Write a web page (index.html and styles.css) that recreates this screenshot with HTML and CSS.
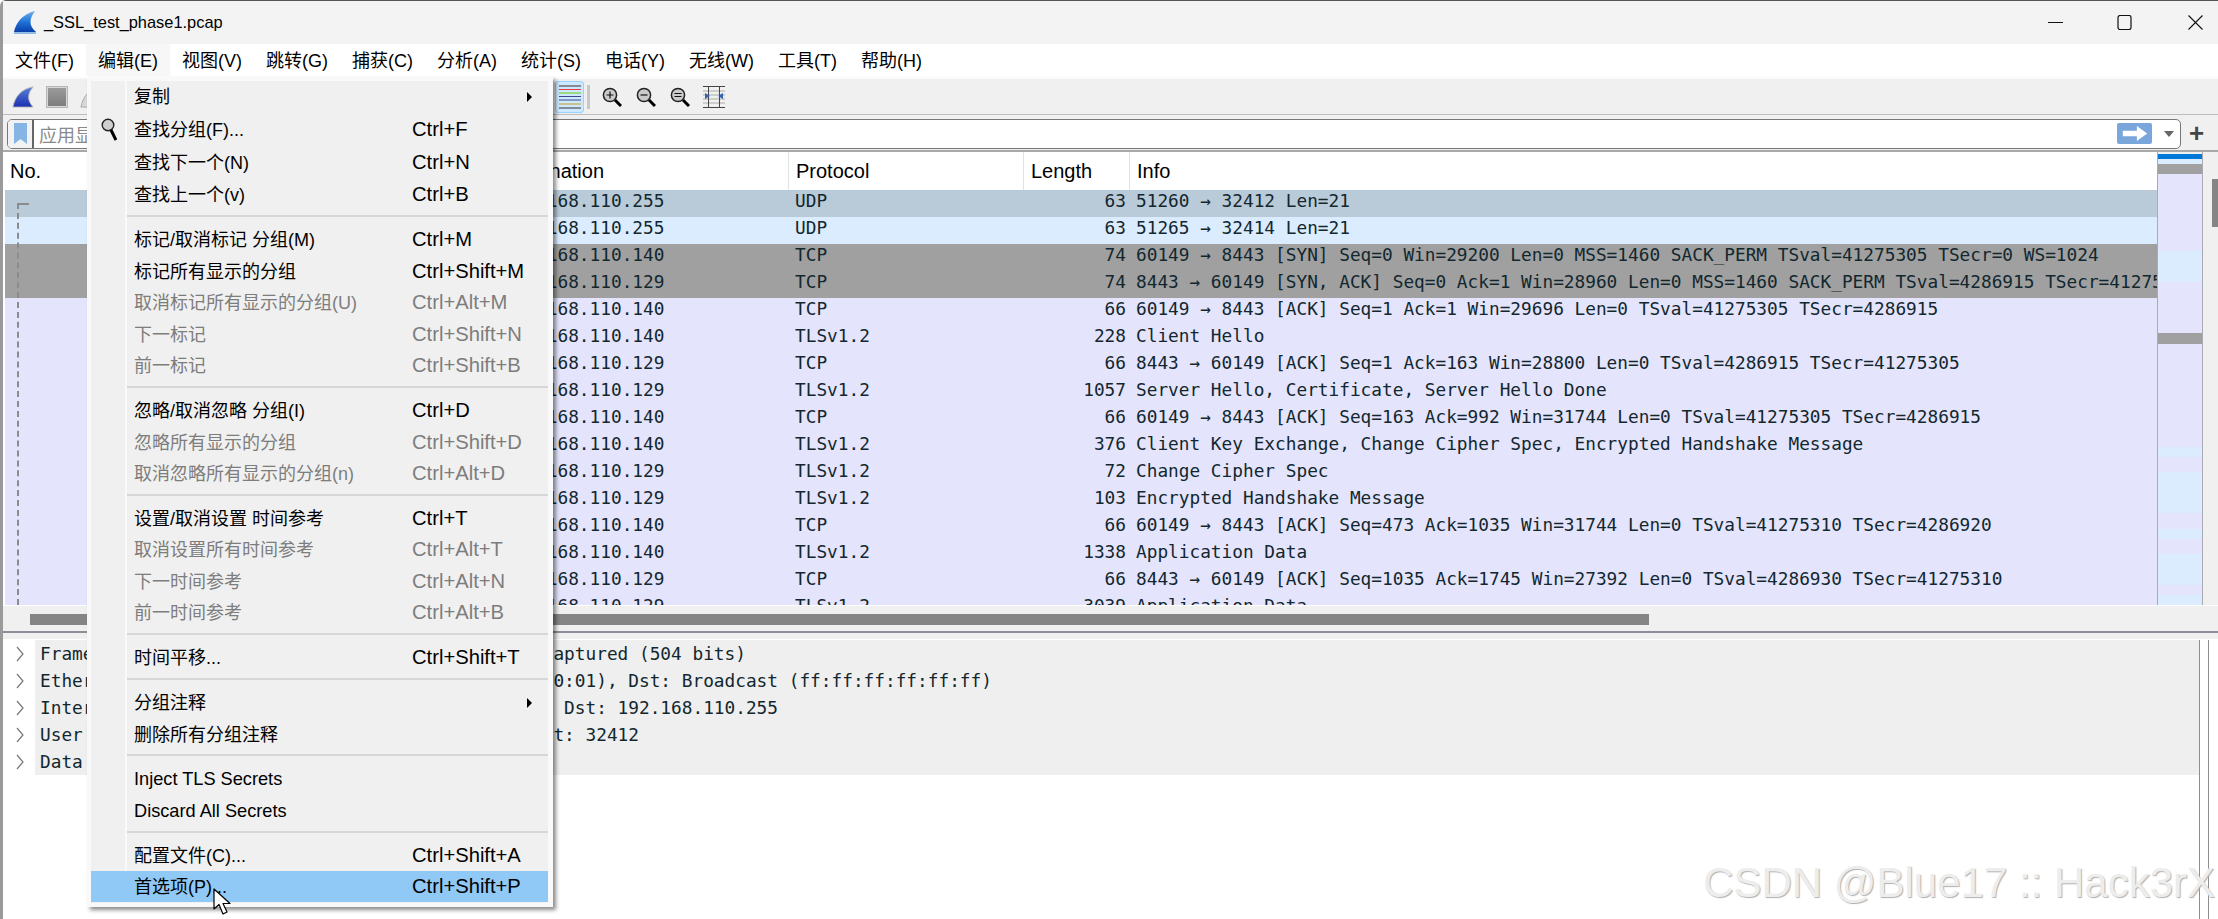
FILE: index.html
```html
<!DOCTYPE html>
<html lang="zh-CN">
<head>
<meta charset="utf-8">
<title>_SSL_test_phase1.pcap</title>
<link rel="stylesheet" href="styles.css">
</head>
<body>
<div class="window">
  <header class="titlebar">
    <svg class="app-icon" viewBox="0 0 24 24"><defs><linearGradient id="fin1" x1="0" y1="0" x2="0" y2="1"><stop offset="0" stop-color="#6fb2ee"/><stop offset=".55" stop-color="#1c6fd6"/><stop offset="1" stop-color="#0b3fa8"/></linearGradient></defs><path d="M0 22C2 12 9 3 22 0C16 8 15 15 23 22Z" fill="url(#fin1)"/><path d="M0 22H23V24H0Z" fill="#8fb9e6"/></svg>
    <span class="title-text">_SSL_test_phase1.pcap</span>
    <div class="win-controls">
      <svg class="win-btn" viewBox="0 0 15 15"><path d="M0 7.5H15" stroke="#111" fill="none"/></svg>
      <svg class="win-btn" viewBox="0 0 15 15"><rect x="1" y=".5" width="13" height="14" rx="2" stroke="#111" stroke-width="1.2" fill="none"/></svg>
      <svg class="win-btn" viewBox="0 0 15 15"><path d="M.5.5L14.5 14.5M14.5.5L.5 14.5" stroke="#111" stroke-width="1.1" fill="none"/></svg>
    </div>
  </header>

  <nav class="menubar">
    <span class="menu-item">文件(F)</span>
    <span class="menu-item menu-item-open">编辑(E)</span>
    <span class="menu-item">视图(V)</span>
    <span class="menu-item">跳转(G)</span>
    <span class="menu-item">捕获(C)</span>
    <span class="menu-item">分析(A)</span>
    <span class="menu-item">统计(S)</span>
    <span class="menu-item">电话(Y)</span>
    <span class="menu-item">无线(W)</span>
    <span class="menu-item">工具(T)</span>
    <span class="menu-item">帮助(H)</span>
  </nav>

  <div class="toolbar">
    <svg class="tool-icon" viewBox="0 0 24 24"><defs><linearGradient id="fin2" x1="0" y1="0" x2="0" y2="1"><stop offset="0" stop-color="#5a83d8"/><stop offset="1" stop-color="#1b2fb0"/></linearGradient></defs><path d="M1 23C3 12 10 3 23 1C17 8 16 15 23 23Z" fill="url(#fin2)" stroke="#b9b9b9"/></svg>
    <span class="tool-stop"></span>
    <svg class="tool-icon" viewBox="0 0 24 24"><path d="M1 23C3 12 10 3 23 1C17 8 16 15 23 23Z" fill="#d8d8d8" stroke="#a5a5a5"/></svg>
    <span class="tool-spacer"></span>
    <span class="tool-color">
      <svg class="color-lines" viewBox="0 0 22 24"><path d="M0 1H22" stroke="#333"/><path d="M0 4.5H22" stroke="#e33b3b"/><path d="M0 8H22" stroke="#66cc00"/><path d="M0 11.5H22" stroke="#3a4a8c"/><path d="M0 15H22" stroke="#3a4a8c"/><path d="M0 19H22" stroke="#c9981f"/><path d="M0 23H22" stroke="#333"/></svg>
    </span>
    <span class="tool-sep"></span>
    <svg class="zoom-icon" viewBox="0 0 20 20"><circle cx="8" cy="8" r="6.6" fill="#cbcbcb" stroke="#222" stroke-width="1.5"/><path d="M8 4.5V11.5M4.5 8H11.5" stroke="#111" stroke-width="1.2"/><path d="M13 13L19 19" stroke="#000" stroke-width="3"/></svg>
    <svg class="zoom-icon" viewBox="0 0 20 20"><circle cx="8" cy="8" r="6.6" fill="#cbcbcb" stroke="#222" stroke-width="1.5"/><path d="M4.5 8H11.5" stroke="#111" stroke-width="1.2"/><path d="M13 13L19 19" stroke="#000" stroke-width="3"/></svg>
    <svg class="zoom-icon" viewBox="0 0 20 20"><circle cx="8" cy="8" r="6.6" fill="#cbcbcb" stroke="#222" stroke-width="1.5"/><path d="M4.5 6.5H11.5M4.5 9.5H11.5" stroke="#111" stroke-width="1.2"/><path d="M13 13L19 19" stroke="#000" stroke-width="3"/></svg>
    <svg class="resize-icon" viewBox="0 0 22 22"><path d="M0 .5H22M0 21.5H22" stroke="#444"/><path d="M0 5H22M0 9H22M0 13H22M0 17H22" stroke="#aaa"/><path d="M5.5 0V22M16.5 0V22" stroke="#444"/><path d="M2 7V13L7 10Z M20 7V13L15 10Z" fill="#2f66b0"/></svg>
  </div>

  <div class="filterbar">
    <div class="filter-box">
      <span class="filter-mark"><svg class="bookmark" viewBox="0 0 13 21"><path d="M0 0H13V21L6.5 16L0 21Z" fill="#86b4e4"/></svg></span>
      <span class="filter-hint">应用显示过滤器 … &lt;Ctrl-/&gt;</span>
      <span class="filter-apply"><svg class="apply-arrow" viewBox="0 0 26 16"><path d="M0 5H15V0L26 8L15 16V11H0Z" fill="#fff"/></svg></span>
      <span class="filter-drop"></span>
    </div>
    <span class="filter-add">+</span>
  </div>

  <section class="packets">
    <div class="plist">
      <div class="phead">
        <span class="pcell pcell-first">No.</span>
        <span class="pcell">Destination</span>
        <span class="pcell">Protocol</span>
        <span class="pcell">Length</span>
        <span class="pcell">Info</span>
      </div>
      <div class="prow prow-sel"><span></span><span>192.168.110.255</span><span>UDP</span><span class="plen">63</span><span>51260 → 32412 Len=21</span></div>
      <div class="prow prow-udp"><span></span><span>192.168.110.255</span><span>UDP</span><span class="plen">63</span><span>51265 → 32414 Len=21</span></div>
      <div class="prow prow-syn"><span></span><span>192.168.110.140</span><span>TCP</span><span class="plen">74</span><span>60149 → 8443 [SYN] Seq=0 Win=29200 Len=0 MSS=1460 SACK_PERM TSval=41275305 TSecr=0 WS=1024</span></div>
      <div class="prow prow-syn"><span></span><span>192.168.110.129</span><span>TCP</span><span class="plen">74</span><span>8443 → 60149 [SYN, ACK] Seq=0 Ack=1 Win=28960 Len=0 MSS=1460 SACK_PERM TSval=4286915 TSecr=41275305 WS=1024</span></div>
      <div class="prow"><span></span><span>192.168.110.140</span><span>TCP</span><span class="plen">66</span><span>60149 → 8443 [ACK] Seq=1 Ack=1 Win=29696 Len=0 TSval=41275305 TSecr=4286915</span></div>
      <div class="prow"><span></span><span>192.168.110.140</span><span>TLSv1.2</span><span class="plen">228</span><span>Client Hello</span></div>
      <div class="prow"><span></span><span>192.168.110.129</span><span>TCP</span><span class="plen">66</span><span>8443 → 60149 [ACK] Seq=1 Ack=163 Win=28800 Len=0 TSval=4286915 TSecr=41275305</span></div>
      <div class="prow"><span></span><span>192.168.110.129</span><span>TLSv1.2</span><span class="plen">1057</span><span>Server Hello, Certificate, Server Hello Done</span></div>
      <div class="prow"><span></span><span>192.168.110.140</span><span>TCP</span><span class="plen">66</span><span>60149 → 8443 [ACK] Seq=163 Ack=992 Win=31744 Len=0 TSval=41275305 TSecr=4286915</span></div>
      <div class="prow"><span></span><span>192.168.110.140</span><span>TLSv1.2</span><span class="plen">376</span><span>Client Key Exchange, Change Cipher Spec, Encrypted Handshake Message</span></div>
      <div class="prow"><span></span><span>192.168.110.129</span><span>TLSv1.2</span><span class="plen">72</span><span>Change Cipher Spec</span></div>
      <div class="prow"><span></span><span>192.168.110.129</span><span>TLSv1.2</span><span class="plen">103</span><span>Encrypted Handshake Message</span></div>
      <div class="prow"><span></span><span>192.168.110.140</span><span>TCP</span><span class="plen">66</span><span>60149 → 8443 [ACK] Seq=473 Ack=1035 Win=31744 Len=0 TSval=41275310 TSecr=4286920</span></div>
      <div class="prow"><span></span><span>192.168.110.140</span><span>TLSv1.2</span><span class="plen">1338</span><span>Application Data</span></div>
      <div class="prow"><span></span><span>192.168.110.129</span><span>TCP</span><span class="plen">66</span><span>8443 → 60149 [ACK] Seq=1035 Ack=1745 Win=27392 Len=0 TSval=4286930 TSecr=41275310</span></div>
      <div class="prow"><span></span><span>192.168.110.129</span><span>TLSv1.2</span><span class="plen">3039</span><span>Application Data</span></div>
      <div class="tree-line"></div>
    </div>
    <div class="minimap">
      <i class="mm mm-blue mm-5"></i><i class="mm mm-udp mm-5"></i><i class="mm mm-gray mm-10"></i><i class="mm mm-77"></i><i class="mm mm-udp mm-31"></i><i class="mm mm-51"></i><i class="mm mm-gray mm-11"></i><i class="mm mm-103"></i><i class="mm mm-udp mm-10"></i><i class="mm mm-15"></i><i class="mm mm-udp mm-41"></i><i class="mm mm-16"></i><i class="mm mm-udp mm-10"></i><i class="mm mm-15"></i><i class="mm mm-udp mm-31"></i><i class="mm mm-10"></i><i class="mm mm-udp mm-10"></i>
    </div>
    <div class="vscroll"><span class="vthumb"></span></div>
  </section>

  <div class="hscroll"><span class="hthumb"></span></div>

  <section class="details">
    <div class="detail-body">
      <div class="drow"><svg class="chev" viewBox="0 0 8 16"><path d="M1 1L7 8L1 15" fill="none" stroke="#777" stroke-width="1.2"/></svg><span class="dtext">Frame 1: 63 bytes on wire (504 bits), 63 bytes captured (504 bits)</span></div>
      <div class="drow"><svg class="chev" viewBox="0 0 8 16"><path d="M1 1L7 8L1 15" fill="none" stroke="#777" stroke-width="1.2"/></svg><span class="dtext">Ethernet II, Src: VMware_c0:00:01 (00:50:56:c0:00:01), Dst: Broadcast (ff:ff:ff:ff:ff:ff)</span></div>
      <div class="drow"><svg class="chev" viewBox="0 0 8 16"><path d="M1 1L7 8L1 15" fill="none" stroke="#777" stroke-width="1.2"/></svg><span class="dtext">Internet Protocol Version 4, Src: 192.168.110.1, Dst: 192.168.110.255</span></div>
      <div class="drow"><svg class="chev" viewBox="0 0 8 16"><path d="M1 1L7 8L1 15" fill="none" stroke="#777" stroke-width="1.2"/></svg><span class="dtext">User Datagram Protocol, Src Port: 51260, Dst Port: 32412</span></div>
      <div class="drow"><svg class="chev" viewBox="0 0 8 16"><path d="M1 1L7 8L1 15" fill="none" stroke="#777" stroke-width="1.2"/></svg><span class="dtext">Data (21 bytes)</span></div>
    </div>
    <div class="detail-side"></div>
  </section>
</div>

<div class="menu">
  <div class="mrow mrow-first"><span></span><span class="mlabel">复制</span><span class="mkey"><i class="marrow"></i></span></div>
  <div class="mrow mrow-tall"><span class="mglyph"><svg class="find-icon" viewBox="0 0 16 23"><circle cx="7" cy="7" r="5.8" fill="#cfcfcf" stroke="#222" stroke-width="1.4"/><path d="M10 12L15 22" stroke="#000" stroke-width="3"/></svg></span><span class="mlabel">查找分组(F)...</span><span class="mkey">Ctrl+F</span></div>
  <div class="mrow mrow-tall"><span></span><span class="mlabel">查找下一个(N)</span><span class="mkey">Ctrl+N</span></div>
  <div class="mrow"><span></span><span class="mlabel">查找上一个(v)</span><span class="mkey">Ctrl+B</span></div>
  <div class="msep"></div>
  <div class="mrow"><span></span><span class="mlabel">标记/取消标记 分组(M)</span><span class="mkey">Ctrl+M</span></div>
  <div class="mrow"><span></span><span class="mlabel">标记所有显示的分组</span><span class="mkey">Ctrl+Shift+M</span></div>
  <div class="mrow mrow-off"><span></span><span class="mlabel">取消标记所有显示的分组(U)</span><span class="mkey">Ctrl+Alt+M</span></div>
  <div class="mrow mrow-off"><span></span><span class="mlabel">下一标记</span><span class="mkey">Ctrl+Shift+N</span></div>
  <div class="mrow mrow-off"><span></span><span class="mlabel">前一标记</span><span class="mkey">Ctrl+Shift+B</span></div>
  <div class="msep"></div>
  <div class="mrow"><span></span><span class="mlabel">忽略/取消忽略 分组(I)</span><span class="mkey">Ctrl+D</span></div>
  <div class="mrow mrow-off"><span></span><span class="mlabel">忽略所有显示的分组</span><span class="mkey">Ctrl+Shift+D</span></div>
  <div class="mrow mrow-off"><span></span><span class="mlabel">取消忽略所有显示的分组(n)</span><span class="mkey">Ctrl+Alt+D</span></div>
  <div class="msep"></div>
  <div class="mrow"><span></span><span class="mlabel">设置/取消设置 时间参考</span><span class="mkey">Ctrl+T</span></div>
  <div class="mrow mrow-off"><span></span><span class="mlabel">取消设置所有时间参考</span><span class="mkey">Ctrl+Alt+T</span></div>
  <div class="mrow mrow-off"><span></span><span class="mlabel">下一时间参考</span><span class="mkey">Ctrl+Alt+N</span></div>
  <div class="mrow mrow-off"><span></span><span class="mlabel">前一时间参考</span><span class="mkey">Ctrl+Alt+B</span></div>
  <div class="msep"></div>
  <div class="mrow"><span></span><span class="mlabel">时间平移...</span><span class="mkey">Ctrl+Shift+T</span></div>
  <div class="msep"></div>
  <div class="mrow"><span></span><span class="mlabel">分组注释</span><span class="mkey"><i class="marrow"></i></span></div>
  <div class="mrow"><span></span><span class="mlabel">删除所有分组注释</span><span class="mkey"></span></div>
  <div class="msep"></div>
  <div class="mrow"><span></span><span class="mlabel mlabel-latin">Inject TLS Secrets</span><span class="mkey"></span></div>
  <div class="mrow"><span></span><span class="mlabel mlabel-latin">Discard All Secrets</span><span class="mkey"></span></div>
  <div class="msep"></div>
  <div class="mrow"><span></span><span class="mlabel">配置文件(C)...</span><span class="mkey">Ctrl+Shift+A</span></div>
  <div class="mrow mrow-active"><span></span><span class="mlabel">首选项(P)...</span><span class="mkey">Ctrl+Shift+P</span></div>
</div>

<svg class="cursor" viewBox="0 0 18 27"><path d="M1 1V21L6 16.5L10 26L14 24L10 15.5H17Z" fill="#fff" stroke="#000" stroke-width="1.2" stroke-linejoin="round"/></svg>
<div class="watermark">CSDN @Blue17 :: Hack3rX</div>
</body>
</html>
```
FILE: styles.css
```css
* { box-sizing: border-box; }
html, body { margin: 0; padding: 0; }
body {
  position: relative;
  width: 2218px;
  height: 919px;
  overflow: hidden;
  background: #fff;
  font-family: "Liberation Sans", "Noto Sans CJK SC", sans-serif;
  color: #000;
}
.window {
  display: flex;
  flex-direction: column;
  height: 919px;
  border-left: 3px solid #9a9a9a;
  border-top: 1px solid #555;
  border-top-left-radius: 6px;
}
.titlebar {
  display: flex;
  align-items: center;
  height: 43px;
  background: #f3f3f3;
  padding-left: 11px;
}
.app-icon { width: 23px; height: 23px; }
.title-text { margin-left: 7px; font-size: 16.4px; }
.win-controls { display: flex; margin-left: auto; padding-right: 15px; align-items: center; }
.win-btn { width: 15px; height: 15px; }
.win-btn + .win-btn { margin-left: 54px; }
.win-btn:last-child { margin-left: 56px; }

.menubar { display: flex; height: 33px; background: #fff; font-size: 18px; }
.menu-item { padding: 0 12px; line-height: 34px; height: 32px; }
.menu-item-open { background: #f7f7f7; }

.toolbar {
  display: flex;
  align-items: center;
  height: 38px;
  padding-left: 9px;
  background: #f0f0f0;
  border-top: 2px solid #fafafa;
  border-bottom: 1px solid #bdbdbd;
}
.tool-icon { width: 22px; height: 24px; margin-right: 12px; }
.tool-stop {
  width: 22px;
  height: 22px;
  margin-right: 12px;
  background: linear-gradient(#9a9a9a, #7e7e7e);
  border: 2px solid #d8d8d8;
  outline: 1px solid #b5b5b5;
  outline-offset: -1px;
}
.tool-spacer { width: 441px; }
.tool-color {
  display: flex;
  align-items: center;
  justify-content: center;
  width: 29px;
  height: 32px;
  background: #cde8ff;
  border: 1px solid #99d1ff;
  border-radius: 3px;
}
.color-lines { width: 22px; height: 24px; }
.tool-sep { width: 3px; height: 24px; margin: 0 12px 0 3px; background: #c8c8c8; }
.zoom-icon { width: 20px; height: 20px; margin-right: 14px; }
.zoom-icon + .resize-icon { margin-left: -1px; }
.resize-icon { width: 22px; height: 22px; }

.filterbar {
  display: flex;
  align-items: center;
  height: 37px;
  padding: 0 0 0 4px;
  background: #f0f0f0;
  border-bottom: 2px solid #a8a8a8;
}
.filter-box {
  display: flex;
  align-items: center;
  width: 2174px;
  height: 30px;
  margin-top: 2px;
  background: #fff;
  border: 1.5px solid #777;
  border-radius: 5px;
}
.filter-mark {
  display: flex;
  align-items: center;
  justify-content: center;
  width: 26px;
  height: 100%;
  background: #f2f2f2;
  border-right: 2px solid #666;
  border-radius: 4px 0 0 4px;
}
.bookmark { width: 13px; height: 21px; }
.filter-hint { margin-left: 5px; font-size: 18px; color: #8a8a8a; }
.filter-apply {
  display: flex;
  align-items: center;
  justify-content: center;
  width: 35px;
  height: 21px;
  margin-left: auto;
  background: #79a6db;
  border-radius: 2px;
}
.apply-arrow { width: 26px; height: 15px; }
.filter-drop {
  width: 0;
  height: 0;
  margin: 0 6px 0 12px;
  border-left: 5px solid transparent;
  border-right: 5px solid transparent;
  border-top: 6px solid #666;
}
.filter-add { margin-left: 8px; font-size: 26px; font-weight: bold; line-height: 26px; color: #444; }

.packets { display: flex; height: 453px; background: #f0f0f0; }
.plist {
  position: relative;
  width: 2155px;
  height: 453px;
  overflow: hidden;
  padding-left: 2px;
  background: #fff;
}
.phead, .prow {
  display: grid;
  grid-template-columns: 493px 291px 235px 106px 1fr;
  white-space: nowrap;
}
.phead { grid-template-columns: 492px 292px 235px 106px 1fr; height: 38px; font-size: 20px; line-height: 38px; background: #fff; }
.pcell { padding-left: 7px; border-right: 1px solid #e2e2e2; }
.pcell:last-child { border-right: 0; }
.pcell-first { padding-left: 5px; }
.prow {
  height: 27px;
  font-family: "DejaVu Sans Mono", monospace;
  font-size: 17.77px;
  line-height: 22px;
  color: #12272e;
  background: #e4e4fc;
  overflow: hidden;
}
.prow span { padding-left: 6px; overflow: hidden; }
.prow .plen { text-align: right; padding: 0 4px 0 0; }
.prow-sel { background: #b9cad8; }
.prow-udp { background: #daecfe; }
.prow-syn { background: #a0a0a0; }
.tree-line {
  position: absolute;
  left: 14px;
  top: 51px;
  width: 12px;
  height: 402px;
  border-left: 2px dashed #8c8c8c;
  border-top: 2px solid #8c8c8c;
}
.minimap {
  display: flex;
  flex-direction: column;
  width: 46px;
  height: 453px;
  padding-top: 2px;
  background: #f0f0f0;
  border-left: 1px solid #aaaab4;
  border-right: 1px solid #aaaab4;
}
.mm { display: block; background: #e4e4fc; flex: none; }
.mm-blue { background: #0078d7; }
.mm-udp { background: #daecfe; }
.mm-gray { background: #a0a0a0; }
.mm-5 { height: 5px; }
.mm-10 { height: 10px; }
.mm-11 { height: 11px; }
.mm-15 { height: 15px; }
.mm-16 { height: 16px; }
.mm-31 { height: 31px; }
.mm-41 { height: 41px; }
.mm-51 { height: 51px; }
.mm-77 { height: 77px; }
.mm-103 { height: 103px; }
.vscroll { flex: 1; padding: 27px 0 0 9px; }
.vthumb { display: block; width: 6px; height: 48px; background: #858585; }

.hscroll {
  height: 35px;
  padding: 8px 0 0 27px;
  background: #f0f0f0;
  border-top: 1px solid #fff;
  border-bottom: 1px solid #fff;
  position: relative;
}
.hthumb { display: block; width: 1619px; height: 11px; background: #858585; }
.hscroll::after {
  content: "";
  position: absolute;
  left: 0;
  right: 0;
  top: 25px;
  height: 2px;
  background: #8e8e98;
}

.details { display: flex; flex: 1; background: #fff; }
.detail-body { width: 2197px; border-right: 1px solid #8e8e8e; }
.detail-side { width: 9px; border-right: 1px solid #8e8e8e; }
.drow { display: flex; height: 27px; }
.chev { width: 8px; height: 16px; margin: 6px 11px 0 13px; flex: none; }
.dtext {
  flex: 1;
  padding-left: 5px;
  font-family: "DejaVu Sans Mono", monospace;
  font-size: 17.77px;
  line-height: 28px;
  color: #12272e;
  background: #efefef;
  white-space: nowrap;
}

.menu {
  position: absolute;
  left: 87px;
  top: 77px;
  width: 466px;
  height: 830px;
  padding-bottom: 3px;
  background: #f0f0f0;
  border-style: solid;
  border-color: #f9f9f9;
  border-width: 4px 5px 4px 4px;
  box-shadow: 3px 3px 4px rgba(0, 0, 0, .45);
}
.menu::before {
  content: "";
  position: absolute;
  left: 34px;
  top: 0;
  bottom: 0;
  width: 2px;
  background: #f9f9f9;
}
.mrow {
  position: relative;
  display: grid;
  grid-template-columns: 43px 278px 1fr;
  align-items: center;
  height: 31.5px;
  white-space: nowrap;
}
.mrow-first { height: 30px; margin-bottom: 1.5px; }
.mrow-tall { height: 33px; }
.mlabel { font-size: 18px; margin-bottom: 2px; }
.mlabel-latin { font-size: 18.2px; margin: 2px 0 0; }
.mkey { font-size: 20.2px; margin-top: 1px; }
.mrow-off { color: #7d7d7d; }
.mrow-active { background: #90c8f6; }
.mglyph { display: flex; justify-content: center; padding-right: 7px; }
.find-icon { width: 16px; height: 23px; }
.marrow {
  display: block;
  width: 0;
  height: 0;
  margin-left: 115px;
  border-top: 5px solid transparent;
  border-bottom: 5px solid transparent;
  border-left: 5px solid #000;
}
.msep { position: relative; height: 13.4px; margin-left: 36px; }
.msep::after {
  content: "";
  position: absolute;
  left: 0;
  right: 0;
  top: 5px;
  height: 2px;
  background: #d7d7d7;
}
.cursor { position: absolute; left: 213px; top: 888px; width: 18px; height: 27px; }
.watermark {
  position: absolute;
  right: 3px;
  top: 858px;
  font-size: 42px;
  line-height: 50px;
  white-space: nowrap;
  color: #ededed;
  text-shadow: 1px 1px 1px #b0b0b0;
}
```
